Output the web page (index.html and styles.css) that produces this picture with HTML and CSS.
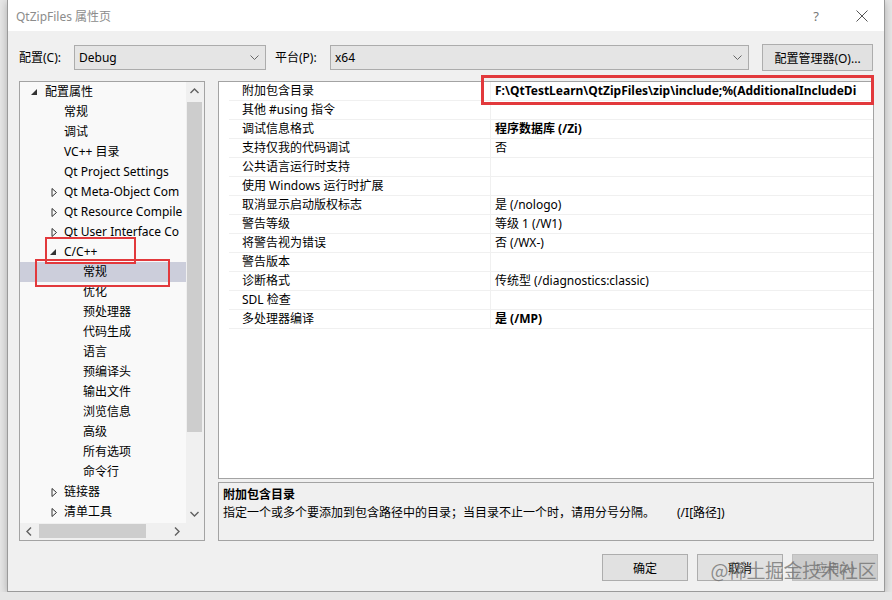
FILE: index.html
```html
<!DOCTYPE html>
<html lang="zh-CN">
<head>
    <meta charset="UTF-8">
    <title>QtZipFiles 属性页</title>
    <link rel="stylesheet" href="styles.css">
</head>
<body>
    <div class="dialog">
        <div class="titlebar">
            <span class="title">QtZipFiles 属性页</span>
            <span class="help">?</span>
            <svg class="close" width="12" height="12" viewBox="0 0 12 12"><path d="M0.5 0.5 L11.5 11.5 M11.5 0.5 L0.5 11.5" stroke="#555" stroke-width="1" fill="none"/></svg>
        </div>

        <div class="toolbar">
            <span class="label">配置(C):</span>
            <div class="combo combo-config">
                <span>Debug</span>
                <svg width="9" height="6" viewBox="0 0 9 6"><path d="M0.5 0.5 L4.5 4.5 L8.5 0.5" stroke="#666" fill="none"/></svg>
            </div>
            <span class="label">平台(P):</span>
            <div class="combo combo-platform">
                <span>x64</span>
                <svg width="9" height="6" viewBox="0 0 9 6"><path d="M0.5 0.5 L4.5 4.5 L8.5 0.5" stroke="#666" fill="none"/></svg>
            </div>
            <button class="btn btn-manager">配置管理器(O)...</button>
        </div>

        <div class="main">
            <div class="tree-panel">
                <div class="tree">
                    <div class="node lv1"><svg class="arrow open" width="7" height="7" viewBox="0 0 7 7"><path d="M6 0 L6 6 L0 6 Z" fill="#333"/></svg>配置属性</div>
                    <div class="node lv2">常规</div>
                    <div class="node lv2">调试</div>
                    <div class="node lv2">VC++ 目录</div>
                    <div class="node lv2">Qt Project Settings</div>
                    <div class="node lv2"><svg class="arrow" width="7" height="9" viewBox="0 0 7 9"><path d="M1 0.5 L5.5 4.5 L1 8.5 Z" stroke="#333" fill="none"/></svg>Qt Meta-Object Com</div>
                    <div class="node lv2"><svg class="arrow" width="7" height="9" viewBox="0 0 7 9"><path d="M1 0.5 L5.5 4.5 L1 8.5 Z" stroke="#333" fill="none"/></svg>Qt Resource Compile</div>
                    <div class="node lv2"><svg class="arrow" width="7" height="9" viewBox="0 0 7 9"><path d="M1 0.5 L5.5 4.5 L1 8.5 Z" stroke="#333" fill="none"/></svg>Qt User Interface Co</div>
                    <div class="node lv2"><svg class="arrow open" width="7" height="7" viewBox="0 0 7 7"><path d="M6 0 L6 6 L0 6 Z" fill="#333"/></svg>C/C++</div>
                    <div class="node lv3 selected">常规</div>
                    <div class="node lv3">优化</div>
                    <div class="node lv3">预处理器</div>
                    <div class="node lv3">代码生成</div>
                    <div class="node lv3">语言</div>
                    <div class="node lv3">预编译头</div>
                    <div class="node lv3">输出文件</div>
                    <div class="node lv3">浏览信息</div>
                    <div class="node lv3">高级</div>
                    <div class="node lv3">所有选项</div>
                    <div class="node lv3">命令行</div>
                    <div class="node lv2"><svg class="arrow" width="7" height="9" viewBox="0 0 7 9"><path d="M1 0.5 L5.5 4.5 L1 8.5 Z" stroke="#333" fill="none"/></svg>链接器</div>
                    <div class="node lv2"><svg class="arrow" width="7" height="9" viewBox="0 0 7 9"><path d="M1 0.5 L5.5 4.5 L1 8.5 Z" stroke="#333" fill="none"/></svg>清单工具</div>
                </div>
                <div class="vscroll">
                    <svg width="9" height="6" viewBox="0 0 9 6"><path d="M0.5 5 L4.5 1 L8.5 5" stroke="#606060" stroke-width="1.4" fill="none"/></svg>
                    <div class="vtrack"><div class="vthumb"></div></div>
                    <svg width="9" height="6" viewBox="0 0 9 6"><path d="M0.5 1 L4.5 5 L8.5 1" stroke="#606060" stroke-width="1.4" fill="none"/></svg>
                </div>
                <div class="hscroll">
                    <svg width="6" height="9" viewBox="0 0 6 9"><path d="M5 0.5 L1 4.5 L5 8.5" stroke="#606060" stroke-width="1.4" fill="none"/></svg>
                    <div class="htrack"><div class="hthumb"></div></div>
                    <svg width="6" height="9" viewBox="0 0 6 9"><path d="M1 0.5 L5 4.5 L1 8.5" stroke="#606060" stroke-width="1.4" fill="none"/></svg>
                </div>
                <div class="corner"></div>
                <div class="mark mark-cpp"></div>
                <div class="mark mark-general"></div>
            </div>

            <div class="right">
                <div class="grid">
                    <div class="row"><span class="name">附加包含目录</span><span class="value bold">F:\QtTestLearn\QtZipFiles\zip\include;%(AdditionalIncludeDi</span></div>
                    <div class="row"><span class="name">其他 #using 指令</span><span class="value"></span></div>
                    <div class="row"><span class="name">调试信息格式</span><span class="value bold">程序数据库 (/Zi)</span></div>
                    <div class="row"><span class="name">支持仅我的代码调试</span><span class="value">否</span></div>
                    <div class="row"><span class="name">公共语言运行时支持</span><span class="value"></span></div>
                    <div class="row"><span class="name">使用 Windows 运行时扩展</span><span class="value"></span></div>
                    <div class="row"><span class="name">取消显示启动版权标志</span><span class="value">是 (/nologo)</span></div>
                    <div class="row"><span class="name">警告等级</span><span class="value">等级 1 (/W1)</span></div>
                    <div class="row"><span class="name">将警告视为错误</span><span class="value">否 (/WX-)</span></div>
                    <div class="row"><span class="name">警告版本</span><span class="value"></span></div>
                    <div class="row"><span class="name">诊断格式</span><span class="value">传统型 (/diagnostics:classic)</span></div>
                    <div class="row"><span class="name">SDL 检查</span><span class="value"></span></div>
                    <div class="row"><span class="name">多处理器编译</span><span class="value bold">是 (/MP)</span></div>
                </div>
                <div class="desc">
                    <div class="desc-title">附加包含目录</div>
                    <div class="desc-text">指定一个或多个要添加到包含路径中的目录；当目录不止一个时，请用分号分隔。<span class="switch">(/I[路径])</span></div>
                </div>
                <div class="mark mark-value"></div>
            </div>
        </div>

        <div class="footer">
            <button class="btn btn-foot">确定</button>
            <button class="btn btn-foot">取消</button>
            <button class="btn btn-foot disabled">应用(A)</button>
            <span class="watermark">@稀土掘金技术社区</span>
        </div>
    </div>
</body>
</html>
```

FILE: styles.css
```css
body {
    margin: 0;
    background: #e6e6e6;
    font-family: "Noto Sans", "Noto Sans CJK SC", sans-serif;
    font-size: 12px;
    color: #000;
    overflow: hidden;
}
.dialog {
    margin-left: 7px;
    width: 876px;
    height: 591px;
    background: #f0f0f0;
    border: 1px solid #9a9a9a;
    border-top: none;
    box-shadow: 0 2px 8px rgba(0, 0, 0, 0.25);
    position: relative;
}
.titlebar {
    height: 31px;
    background: #fff;
    display: flex;
    align-items: center;
    padding-left: 8px;
}
.title {
    color: #8c8c8c;
    flex: 1;
}
.help {
    color: #777;
    font-size: 13px;
    margin-right: 37px;
}
.close {
    margin-right: 16px;
}
.toolbar {
    display: flex;
    align-items: center;
    height: 27px;
    margin-top: 13px;
    padding-left: 11px;
}
.label {
    width: 55px;
    line-height: 16px;
}
.combo {
    background: #e5e5e5;
    border: 1px solid #acacac;
    display: flex;
    align-items: center;
    justify-content: space-between;
    padding: 0 6px 0 4px;
    box-sizing: border-box;
    height: 25px;
}
.combo-config {
    width: 192px;
    margin-right: 9px;
}
.combo-platform {
    width: 419px;
    margin-right: 13px;
}
.btn {
    font-family: inherit;
    font-size: 12px;
    background: #e1e1e1;
    border: 1px solid #adadad;
    color: #000;
    padding: 0;
}
.btn-manager {
    width: 111px;
    height: 27px;
}
.main {
    display: flex;
    gap: 13px;
    margin-top: 10px;
    padding-left: 11px;
    height: 460px;
}
.tree-panel {
    width: 186px;
    box-sizing: border-box;
    border: 1px solid #a3a3a3;
    display: grid;
    grid-template-columns: 166px 17px;
    grid-template-rows: 441px 17px;
    position: relative;
}
.tree {
    background: #f9f9f9;
    overflow: hidden;
}
.node {
    height: 20px;
    line-height: 20px;
    white-space: nowrap;
    position: relative;
}
.lv1 { padding-left: 25px; }
.lv2 { padding-left: 44px; }
.lv3 { padding-left: 63px; }
.arrow {
    position: absolute;
    top: 6px;
    margin-left: -13px;
}
.arrow.open {
    top: 7px;
    margin-left: -14px;
}
.selected {
    background: #cccedb;
}
.vscroll {
    background: #f0f0f0;
    display: flex;
    flex-direction: column;
    align-items: center;
    padding: 6px 0;
    box-sizing: border-box;
}
.vtrack {
    flex: 1;
    width: 100%;
    padding: 5px 1px;
    box-sizing: border-box;
}
.vthumb {
    height: 330px;
    margin-top: 3px;
    background: #cdcdcd;
}
.hscroll {
    background: #f0f0f0;
    display: flex;
    align-items: center;
    padding: 0 6px;
}
.htrack {
    flex: 1;
    height: 100%;
    padding: 1px 5px;
    box-sizing: border-box;
}
.hthumb {
    width: 107px;
    height: 14px;
    margin-left: 2px;
    background: #cdcdcd;
}
.corner {
    background: #f0f0f0;
}
.mark {
    position: absolute;
    border: 2px solid #e2393c;
    box-sizing: border-box;
    pointer-events: none;
}
.mark-cpp {
    left: 25px;
    top: 155px;
    width: 91px;
    height: 27px;
}
.mark-general {
    left: 15px;
    top: 177px;
    width: 135px;
    height: 28px;
}
.right {
    width: 656px;
    display: flex;
    flex-direction: column;
    gap: 3px;
    position: relative;
}
.grid {
    height: 398px;
    background: #fff;
    border: 1px solid #a3a3a3;
    overflow: hidden;
}
.row {
    display: grid;
    grid-template-columns: 262px 1fr;
    height: 19px;
    line-height: 18px;
    border-bottom: 1px solid #f0f0f0;
    box-sizing: border-box;
    margin-left: 10px;
}
.name {
    padding-left: 13px;
    white-space: nowrap;
    border-right: 1px solid #f0f0f0;
}
.value {
    padding-left: 4px;
    white-space: nowrap;
    overflow: hidden;
}
.bold {
    font-weight: bold;
}
.desc {
    height: 59px;
    border: 1px solid #a3a3a3;
    box-sizing: border-box;
    padding: 3px 4px;
    line-height: 18px;
}
.desc-title {
    font-weight: bold;
}
.switch {
    margin-left: 22px;
}
.mark-value {
    left: 263px;
    top: -6px;
    width: 393px;
    height: 30px;
    border-width: 3px;
}
.footer {
    display: flex;
    justify-content: flex-end;
    gap: 9px;
    padding: 13px 6px 0 0;
    position: relative;
}
.btn-foot {
    width: 86px;
    height: 27px;
}
.disabled {
    background: #cccccc;
    border-color: #bfbfbf;
    color: #838383;
}
.watermark {
    position: absolute;
    right: 8px;
    top: 15px;
    font-size: 19px;
    color: rgba(110, 110, 110, 0.75);
    font-family: "Noto Sans CJK SC", sans-serif;
    letter-spacing: -0.5px;
}
```
